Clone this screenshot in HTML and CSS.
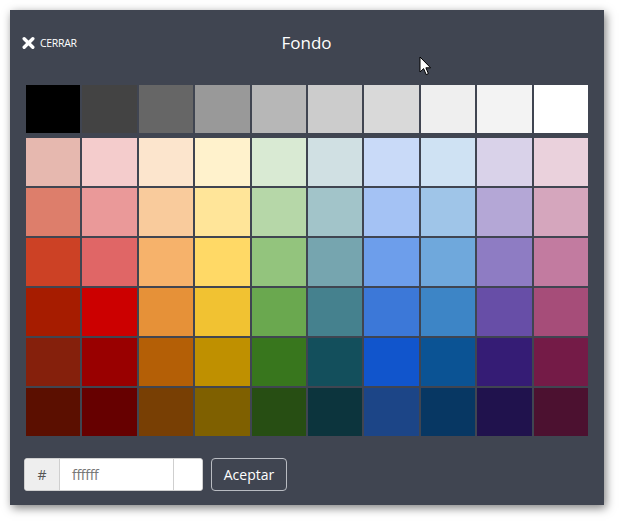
FILE: index.html
```html
<!DOCTYPE html>
<html lang="es">
<head>
<meta charset="utf-8">
<title>Fondo</title>
<link rel="stylesheet" href="styles.css">
</head>
<body>
<div class="panel">
  <div class="header">
    <button class="close" type="button">
      <svg class="close-icon" width="13" height="12" viewBox="0 0 13 12"><path d="M2.2 1.8 L10.8 10.2 M10.8 1.8 L2.2 10.2" stroke="#fff" stroke-width="3.4" stroke-linecap="round"/></svg>
      <span>CERRAR</span>
    </button>
    <div class="title">Fondo</div>
    <div></div>
  </div>
  <div class="palette palette-top">
    <div class="sw" style="background:#000000"></div>
    <div class="sw" style="background:#434343"></div>
    <div class="sw" style="background:#666666"></div>
    <div class="sw" style="background:#999999"></div>
    <div class="sw" style="background:#b7b7b7"></div>
    <div class="sw" style="background:#cccccc"></div>
    <div class="sw" style="background:#d9d9d9"></div>
    <div class="sw" style="background:#efefef"></div>
    <div class="sw" style="background:#f3f3f3"></div>
    <div class="sw" style="background:#ffffff"></div>
  </div>
  <div class="palette">
    <div class="sw" style="background:#e6b8af"></div>
    <div class="sw" style="background:#f4cccc"></div>
    <div class="sw" style="background:#fce5cd"></div>
    <div class="sw" style="background:#fff2cc"></div>
    <div class="sw" style="background:#d9ead3"></div>
    <div class="sw" style="background:#d0e0e3"></div>
    <div class="sw" style="background:#c9daf8"></div>
    <div class="sw" style="background:#cfe2f3"></div>
    <div class="sw" style="background:#d9d2e9"></div>
    <div class="sw" style="background:#ead1dc"></div>

    <div class="sw" style="background:#dd7e6b"></div>
    <div class="sw" style="background:#ea9999"></div>
    <div class="sw" style="background:#f9cb9c"></div>
    <div class="sw" style="background:#ffe599"></div>
    <div class="sw" style="background:#b6d7a8"></div>
    <div class="sw" style="background:#a2c4c9"></div>
    <div class="sw" style="background:#a4c2f4"></div>
    <div class="sw" style="background:#9fc5e8"></div>
    <div class="sw" style="background:#b4a7d6"></div>
    <div class="sw" style="background:#d5a6bd"></div>

    <div class="sw" style="background:#cc4125"></div>
    <div class="sw" style="background:#e06666"></div>
    <div class="sw" style="background:#f6b26b"></div>
    <div class="sw" style="background:#ffd966"></div>
    <div class="sw" style="background:#93c47d"></div>
    <div class="sw" style="background:#76a5af"></div>
    <div class="sw" style="background:#6d9eeb"></div>
    <div class="sw" style="background:#6fa8dc"></div>
    <div class="sw" style="background:#8e7cc3"></div>
    <div class="sw" style="background:#c27ba0"></div>

    <div class="sw" style="background:#a61c00"></div>
    <div class="sw" style="background:#cc0000"></div>
    <div class="sw" style="background:#e69138"></div>
    <div class="sw" style="background:#f1c232"></div>
    <div class="sw" style="background:#6aa84f"></div>
    <div class="sw" style="background:#45818e"></div>
    <div class="sw" style="background:#3c78d8"></div>
    <div class="sw" style="background:#3d85c6"></div>
    <div class="sw" style="background:#674ea7"></div>
    <div class="sw" style="background:#a64d79"></div>

    <div class="sw" style="background:#85200c"></div>
    <div class="sw" style="background:#990000"></div>
    <div class="sw" style="background:#b45f06"></div>
    <div class="sw" style="background:#bf9000"></div>
    <div class="sw" style="background:#38761d"></div>
    <div class="sw" style="background:#134f5c"></div>
    <div class="sw" style="background:#1155cc"></div>
    <div class="sw" style="background:#0b5394"></div>
    <div class="sw" style="background:#351c75"></div>
    <div class="sw" style="background:#741b47"></div>

    <div class="sw" style="background:#5b0f00"></div>
    <div class="sw" style="background:#660000"></div>
    <div class="sw" style="background:#783f04"></div>
    <div class="sw" style="background:#7f6000"></div>
    <div class="sw" style="background:#274e13"></div>
    <div class="sw" style="background:#0c343d"></div>
    <div class="sw" style="background:#1c4587"></div>
    <div class="sw" style="background:#073763"></div>
    <div class="sw" style="background:#20124d"></div>
    <div class="sw" style="background:#4c1130"></div>
  </div>
  <div class="footer">
    <div class="input-group">
      <span class="addon">#</span>
      <span class="hex">ffffff</span>
      <span class="preview" style="background:#ffffff"></span>
    </div>
    <button class="accept" type="button">Aceptar</button>
  </div>
</div>
<svg class="cursor" width="14" height="21" viewBox="0 0 14 21"><path d="M1 1 L1 16 L4.6 12.6 L7.2 18.6 L9.4 17.6 L6.9 11.8 L11.6 11.8 Z" fill="#fff" stroke="#000" stroke-width="1" stroke-linejoin="miter"/></svg>
</body>
</html>
```

FILE: styles.css
```css
html, body {
  margin: 0;
  padding: 0;
  background: #ffffff;
}

body {
  font-family: "Open Sans", "Noto Sans", "DejaVu Sans", sans-serif;
  padding: 10px;
  width: 622px;
  height: 523px;
  box-sizing: border-box;
  overflow: hidden;
  position: relative;
}

.panel {
  width: 594px;
  height: 495px;
  box-sizing: border-box;
  background: #404551;
  box-shadow: 2px 3px 9px rgba(0, 0, 0, 0.5);
  padding: 0 16px;
  display: flex;
  flex-direction: column;
}

.header {
  display: grid;
  grid-template-columns: 1fr auto 1fr;
  align-items: center;
  height: 30px;
  padding-top: 18px;
  margin-bottom: 27px;
}

.close {
  justify-self: start;
  display: flex;
  align-items: center;
  gap: 5px;
  margin-left: -4px;
  padding: 0;
  border: 0;
  background: transparent;
  color: #ffffff;
  font-family: "Open Sans", "Noto Sans", sans-serif;
  font-size: 10.5px;
  font-weight: 400;
  letter-spacing: -0.3px;
  cursor: pointer;
}

.close-icon {
  display: block;
}

.title {
  color: #ffffff;
  font-size: 17px;
  line-height: 20px;
  margin-left: -1px;
}

.palette {
  display: grid;
  grid-template-columns: repeat(10, 1fr);
  grid-auto-rows: 48px;
  gap: 2px;
}

.palette-top {
  margin-bottom: 5px;
}

.footer {
  display: flex;
  align-items: stretch;
  gap: 8px;
  margin-top: 22px;
  margin-left: -2px;
  height: 33px;
}

.input-group {
  display: flex;
  width: 179px;
  box-sizing: border-box;
  border: 1px solid #cfcfcf;
  border-radius: 3px;
  overflow: hidden;
  background: #ffffff;
}

.addon {
  width: 34px;
  flex: none;
  background: #eeeeee;
  border-right: 1px solid #cfcfcf;
  color: #555555;
  font-size: 14px;
  display: flex;
  align-items: center;
  justify-content: center;
}

.hex {
  flex: 1;
  color: #777777;
  font-size: 14px;
  display: flex;
  align-items: center;
  padding-left: 12px;
  letter-spacing: -0.3px;
}

.preview {
  width: 28px;
  flex: none;
  border-left: 1px solid #cfcfcf;
}

.accept {
  width: 76px;
  box-sizing: border-box;
  background: transparent;
  border: 1px solid #b9bcc2;
  border-radius: 4px;
  color: #ffffff;
  font-family: "Open Sans", "Noto Sans", sans-serif;
  font-size: 14px;
  padding: 0;
  cursor: pointer;
}

.cursor {
  position: absolute;
  left: 419px;
  top: 56px;
}
```
